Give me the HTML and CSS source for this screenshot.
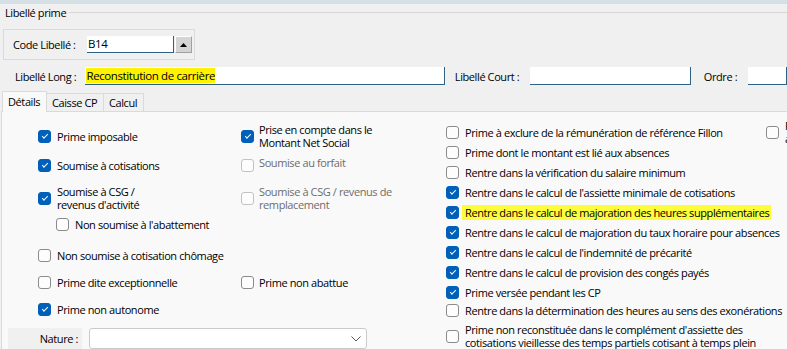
FILE: index.html
```html
<!DOCTYPE html>
<html>
<head>
    <meta charset="utf-8">
    <link rel="stylesheet" href="styles.css">
</head>

<body>
    <div class="topbar"></div>

    <div class="legend">
        <span>Libellé prime</span>
        <div class="legend-line"></div>
    </div>

    <div class="code-box">
        <label class="code-label">Code Libellé :</label>
        <div class="field code">B14</div>
        <div class="spin">
            <svg width="7" height="4" viewBox="0 0 7 4"><polygon points="0,4 7,4 3.5,0" fill="#000"/></svg>
        </div>
    </div>

    <div class="long-row">
        <label class="lbl-long">Libellé Long :</label>
        <div class="field long"><span class="hl">Reconstitution de carrière</span></div>
        <label class="lbl-court">Libellé Court :</label>
        <div class="field court"></div>
        <label class="lbl-ordre">Ordre :</label>
        <div class="field ordre"></div>
    </div>

    <div class="tabs">
        <div class="tab active t-details">Détails</div>
        <div class="tab t-caisse">Caisse CP</div>
        <div class="tab t-calcul">Calcul</div>
    </div>

    <div class="panel">
        <div class="left">
            <div class="row r1">
                <div class="c1 cb-item"><span class="cb on"></span>Prime imposable</div>
                <div class="c2 cb-item"><span class="cb on"></span><span>Prise en compte dans le<br>Montant Net Social</span></div>
            </div>
            <div class="row r2">
                <div class="c1 cb-item"><span class="cb on"></span>Soumise à cotisations</div>
                <div class="c2 cb-item off"><span class="cb"></span><span class="up">Soumise au forfait</span></div>
            </div>
            <div class="row r3">
                <div class="c1 cb-item"><span class="cb on"></span><span>Soumise à CSG /<br>revenus d'activité</span></div>
                <div class="c2 cb-item off"><span class="cb"></span><span>Soumise à CSG / revenus de<br>remplacement</span></div>
            </div>
            <div class="row r4">
                <div class="c1 cb-item sub"><span class="cb"></span>Non soumise à l'abattement</div>
            </div>
            <div class="row r5">
                <div class="c1 cb-item"><span class="cb"></span>Non soumise à cotisation chômage</div>
            </div>
            <div class="row r6">
                <div class="c1 cb-item"><span class="cb"></span>Prime dite exceptionnelle</div>
                <div class="c2 cb-item"><span class="cb"></span>Prime non abattue</div>
            </div>
            <div class="row r7">
                <div class="c1 cb-item"><span class="cb on"></span>Prime non autonome</div>
            </div>
            <div class="nature-row">
                <div class="nature-label">Nature :</div>
                <div class="select">
                    <svg width="10" height="6" viewBox="0 0 10 6"><polyline points="0.5,0.5 5,5 9.5,0.5" fill="none" stroke="#5a5a5a" stroke-width="1"/></svg>
                </div>
            </div>
        </div>

        <div class="right">
            <div class="col3">
                <div class="r-row cb-item"><span class="cb"></span>Prime à exclure de la rémunération de référence Fillon</div>
                <div class="r-row cb-item"><span class="cb"></span>Prime dont le montant est lié aux absences</div>
                <div class="r-row cb-item"><span class="cb"></span>Rentre dans la vérification du salaire minimum</div>
                <div class="r-row cb-item"><span class="cb on"></span>Rentre dans le calcul de l'assiette minimale de cotisations</div>
                <div class="r-row cb-item"><span class="cb on"></span><span class="marker">Rentre dans le calcul de majoration des heures supplémentaires</span></div>
                <div class="r-row cb-item"><span class="cb on"></span>Rentre dans le calcul de majoration du taux horaire pour absences</div>
                <div class="r-row cb-item"><span class="cb on"></span>Rentre dans le calcul de l'indemnité de précarité</div>
                <div class="r-row cb-item"><span class="cb on"></span>Rentre dans le calcul de provision des congés payés</div>
                <div class="r-row cb-item"><span class="cb on"></span>Prime versée pendant les CP</div>
                <div class="r-row cb-item r10"><span class="cb"></span>Rentre dans la détermination des heures au sens des exonérations</div>
                <div class="r-row two cb-item"><span class="cb"></span><span>Prime non reconstituée dans le complément d'assiette des<br>cotisations vieillesse des temps partiels cotisant à temps plein</span></div>
            </div>
            <div class="col4">
                <div class="r-row two cb-item"><span class="cb"></span><span>P<br>a</span></div>
            </div>
        </div>
    </div>
</body>

</html>
```

FILE: styles.css
```css
html, body{
    margin: 0;
    overflow: hidden;
}
body{
    width: 787px;
    height: 349px;
    background-color: #F0F0F0;
    font-family: "Open Sans", "Noto Sans", sans-serif;
    font-size: 11px;
    letter-spacing: -0.4px;
    color: #000;
}

.topbar{
    height: 4px;
    background-color: #D5E0E6;
}

/* group title */
.legend{
    display: flex;
    align-items: center;
    height: 17px;
    padding-left: 5px;
}
.legend-line{
    flex: 1;
    margin-left: 3px;
    border-top: 1px solid #D6D6D6;
}

/* code box */
.code-box{
    display: flex;
    align-items: center;
    width: 190px;
    height: 29px;
    margin: 8px 0 0 3px;
    border: 1px solid #DADADA;
}
.code-label{
    width: 83px;
    padding-left: 9px;
    box-sizing: border-box;
}
.field{
    height: 18px;
    box-sizing: border-box;
    padding-left: 1px;
    line-height: 17px;
    font-size: 11.5px;
    letter-spacing: -0.4px;
    background-color: #fff;
    border-bottom: 1px solid #2B6286;
    border-right: 1px solid #2B6286;
}
.field.code{
    width: 87px;
    height: 17px;
    line-height: 16px;
}
.spin{
    display: flex;
    align-items: center;
    justify-content: center;
    width: 17px;
    height: 17px;
    margin-left: 1px;
    box-sizing: border-box;
    background-color: #D4D4D4;
    border-top: 1px solid #fff;
    border-left: 1px solid #fff;
    border-bottom: 1px solid #A0A0A0;
    border-right: 1px solid #A0A0A0;
}

/* libellé long row */
.long-row{
    display: flex;
    align-items: center;
    height: 18px;
    margin-top: 7px;
}
.lbl-long{
    width: 72px;
    margin-left: 15px;
}
.field.long{ width: 367px; }
.lbl-court{
    width: 77px;
    margin-left: 10px;
}
.field.court{ width: 164px; }
.lbl-ordre{
    width: 45px;
    margin-left: 13px;
}
.field.ordre{ width: 40px; }
.hl{
    background-color: #FFF200;
}

/* tabs */
.tabs{
    display: flex;
    align-items: flex-end;
    height: 20px;
    margin: 6px 0 0 2px;
}
.tab{
    height: 18px;
    box-sizing: border-box;
    padding-left: 5px;
    line-height: 18px;
    background-color: #F0F0F0;
    border-top: 1px solid #DADADA;
    border-right: 1px solid #DADADA;
}
.tab.active{
    position: relative;
    z-index: 1;
    height: 21px;
    margin-bottom: -1px;
    line-height: 19px;
    background-color: #F9F9F9;
    border-left: 1px solid #DADADA;
}
.t-details{ width: 45px; }
.t-caisse{ width: 57px; }
.t-calcul{ width: 40px; }

/* panel */
.panel{
    display: flex;
    height: 240px;
    margin-left: 1px;
    background-color: #F9F9F9;
    border-top: 1px solid #DADADA;
    border-left: 1px solid #DADADA;
}
.left{
    flex: none;
    width: 444px;
    padding-top: 10px;
}
.row{
    display: flex;
    align-items: center;
    padding-left: 36px;
}
.c1{ width: 203px; flex: none; }
.r1{ height: 28px; }
.r2{ height: 30px; }
.r3{ height: 36px; }
.r4{ height: 16px; }
.r5{ height: 28px; margin-top: 9px; }
.r6{ height: 27px; }
.r7{ height: 26px; }
.sub{ padding-left: 18px; }

.cb-item{
    display: flex;
    align-items: center;
    line-height: 13px;
    white-space: nowrap;
}
.cb{
    position: relative;
    flex: none;
    width: 13px;
    height: 13px;
    margin-right: 6px;
    box-sizing: border-box;
    border: 1px solid #8B8B8B;
    border-radius: 3px;
    background-color: #FDFDFD;
}
.cb.on{
    background-color: #005FB8;
    border-color: #005FB8;
}
.cb.on::after{
    content: "";
    position: absolute;
    left: 3px;
    top: 3px;
    width: 5px;
    height: 2px;
    border-left: 1px solid #fff;
    border-bottom: 1px solid #fff;
    transform: rotate(-45deg);
}
.off{ color: #6D6D6D; }
.off .cb{ border-color: #C2C2C2; }
.up{ margin-top: -6px; }
.c2 .cb{ margin-right: 5px; }

/* nature */
.nature-row{
    display: flex;
    height: 21px;
    margin-top: 6px;
    padding-left: 6px;
}
.nature-label{
    width: 74px;
    padding-right: 4px;
    box-sizing: border-box;
    text-align: right;
    line-height: 21px;
    background-color: #F0F0F0;
}
.select{
    display: flex;
    align-items: center;
    justify-content: flex-end;
    width: 278px;
    margin-left: 7px;
    padding-right: 5px;
    box-sizing: border-box;
    background-color: #fff;
    border: 1px solid #CACACA;
    border-radius: 3px;
}

/* right columns */
.right{
    display: flex;
    padding-top: 10px;
}
.col3{
    flex: none;
    width: 320px;
}
.r-row{ height: 20px; }
.r-row.r10{ height: 16px; }
.r-row.two{ height: 36px; }
.col4 .r-row.two{ height: 20px; }
.marker{
    margin-left: -3px;
    padding: 1px 2px 1px 3px;
    background-color: #FDFD3C;
}
```
